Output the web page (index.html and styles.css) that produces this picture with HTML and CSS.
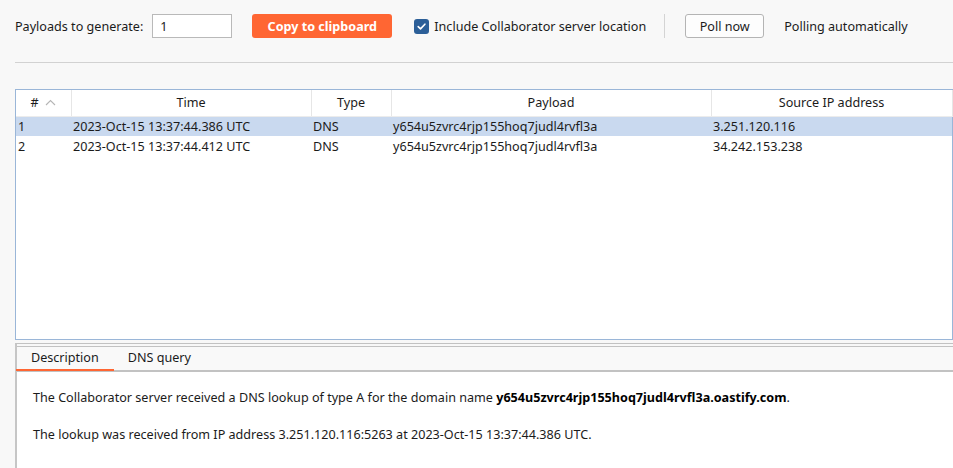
FILE: index.html
```html
<!DOCTYPE html>
<html>
<head>
<meta charset="utf-8">
<link rel="stylesheet" href="styles.css">
</head>
<body>
<div class="toolbar">
  <span class="label">Payloads to generate:</span>
  <input class="num-input" type="text" value="1">
  <button class="btn-primary">Copy to clipboard</button>
  <label class="check">
    <span class="check-box"><svg width="11" height="11" viewBox="0 0 11 11"><path d="M2.2 5.6 L4.5 7.9 L8.9 3.2" fill="none" stroke="#fff" stroke-width="1.6" stroke-linecap="round" stroke-linejoin="round"/></svg></span>
    <span>Include Collaborator server location</span>
  </label>
  <span class="vsep"></span>
  <button class="btn-secondary">Poll now</button>
  <span class="status">Polling automatically</span>
</div>
<div class="rule"></div>
<div class="table-frame">
  <table class="grid">
    <colgroup>
      <col class="c-num"><col class="c-time"><col class="c-type"><col class="c-payload"><col class="c-ip">
    </colgroup>
    <thead>
      <tr>
        <th class="th-num"># <svg class="sort" width="11" height="7" viewBox="0 0 11 7"><path d="M1 6 L5.5 1.5 L10 6" fill="none" stroke="#b5b5b5" stroke-width="1.1"/></svg></th>
        <th>Time</th>
        <th>Type</th>
        <th>Payload</th>
        <th>Source IP address</th>
      </tr>
    </thead>
    <tbody>
      <tr class="selected">
        <td>1</td><td>2023-Oct-15 13:37:44.386 UTC</td><td>DNS</td><td>y654u5zvrc4rjp155hoq7judl4rvfl3a</td><td>3.251.120.116</td>
      </tr>
      <tr>
        <td>2</td><td>2023-Oct-15 13:37:44.412 UTC</td><td>DNS</td><td>y654u5zvrc4rjp155hoq7judl4rvfl3a</td><td>34.242.153.238</td>
      </tr>
    </tbody>
  </table>
</div>
<div class="detail">
  <div class="tabs">
    <span class="tab active">Description</span>
    <span class="tab">DNS query</span>
  </div>
  <div class="content">
    <p>The Collaborator server received a DNS lookup of type A for the domain name <b>y654u5zvrc4rjp155hoq7judl4rvfl3a.oastify.com</b>.</p>
    <p>The lookup was received from IP address 3.251.120.116:5263 at 2023-Oct-15 13:37:44.386 UTC.</p>
  </div>
</div>
</body>
</html>
```
FILE: styles.css
```css
* { box-sizing: border-box; }
html, body { margin: 0; padding: 0; }
body {
  width: 953px;
  height: 468px;
  overflow: hidden;
  background: #f8f8f8;
  font-family: "Noto Sans", "Open Sans", sans-serif;
  font-size: 12.6px;
  color: #1b1b1b;
}
.toolbar {
  display: flex;
  align-items: center;
  height: 24px;
  margin-top: 14px;
  padding-left: 15px;
}
.label { margin-right: 9px; }
.num-input {
  width: 80px;
  height: 24px;
  border: 1px solid #b9b9b9;
  background: #fff;
  font: inherit;
  color: inherit;
  padding: 0 7px;
  margin: 0 20px 0 0;
}
.btn-primary {
  width: 140px;
  height: 24px;
  border: none;
  border-radius: 3px;
  background: #ff6633;
  color: #fff;
  font: inherit;
  font-weight: bold;
  margin-right: 22px;
  padding: 0;
}
.check { display: flex; align-items: center; }
.check-box {
  width: 15px;
  height: 15px;
  border-radius: 3px;
  background: #2c5f98;
  display: flex;
  align-items: center;
  justify-content: center;
  margin-right: 5px;
}
.vsep {
  width: 1px;
  height: 24px;
  background: #d4d4d4;
  margin: 0 20px 0 18px;
}
.btn-secondary {
  width: 79px;
  height: 24px;
  border: 1px solid #b4b4b4;
  border-radius: 3px;
  background: #fdfdfd;
  font: inherit;
  color: inherit;
  padding: 0;
  margin-right: 20px;
}
.rule {
  height: 1px;
  background: #d2d2d2;
  margin: 24px 0 0 15px;
}
.table-frame {
  margin: 26px 0 0 15px;
  width: 938px;
  height: 251px;
  border: 1px solid #9ab6d8;
  background: #fff;
}
.grid {
  border-collapse: collapse;
  table-layout: fixed;
  width: 936px;
}
.c-num { width: 55px; }
.c-time { width: 240px; }
.c-type { width: 80px; }
.c-payload { width: 320px; }
.c-ip { width: 241px; }
.grid th {
  height: 26px;
  font-weight: normal;
  text-align: center;
  border-right: 1px solid #e6e6e6;
  border-bottom: 1px solid #ececec;
  padding: 0;
  white-space: nowrap;
}
.sort { margin-left: 3px; vertical-align: 1px; }
.grid td {
  height: 20px;
  padding: 0 3px 0 2px;
  white-space: nowrap;
  overflow: hidden;
}
.grid tr.selected td { background: #c9d9ef; }
.detail {
  margin: 3px 0 0 15px;
  border-top: 1px solid #c2c2c2;
  border-left: 2px solid #c6c6c6;
  height: 126px;
}
.tabs {
  margin-top: 2px;
  border-top: 1px solid #c2c2c2;
  height: 26px;
  background: #f9f9f9;
  border-bottom: 2px solid #c2c2c2;
  display: flex;
}
.tab {
  padding: 0 15px;
  line-height: 22px;
  height: 24px;
  margin-left: -1px;
}
.tab.active { border-bottom: 2px solid #ff6633; }
.content {
  background: #fff;
  height: 97px;
  padding: 17px 16px 0;
}
.content p { margin: 0 0 20px; line-height: 17px; }
.content b { font-weight: bold; color: #000; }
```
